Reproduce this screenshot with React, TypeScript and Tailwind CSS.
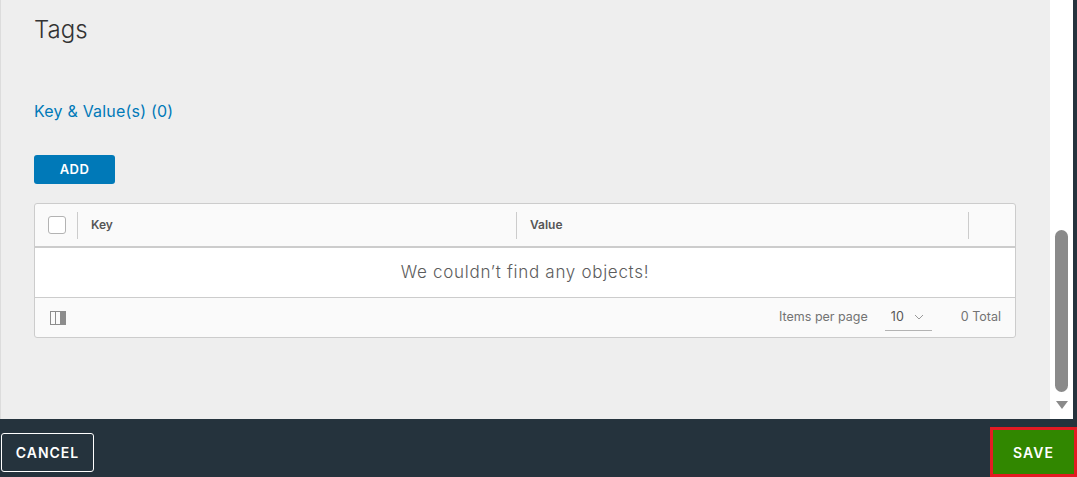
import React from 'react';

const font = { fontFamily: 'Inter, "Noto Sans", sans-serif' };

const ColumnIcon = () => (
    <svg width="16" height="14" viewBox="0 0 16 14" className="block">
        <rect x="0.5" y="0.5" width="15" height="13" fill="none" stroke="#8c8c8c" />
        <line x1="5.5" y1="1" x2="5.5" y2="13" stroke="#8c8c8c" />
        <rect x="10" y="1" width="5.5" height="12" fill="#8c8c8c" />
    </svg>
);

export default function App() {
    return (
        <div className="w-[1077px] h-[477px] flex flex-col overflow-hidden" style={font}>
            <div className="flex h-[419px]">
                <main className="flex-1 bg-[#eeeeee] border-l border-[#dcdcdc] pl-[33px] pr-[34px]">
                    <h2 className="text-[24px] font-light text-[#333] leading-none pt-[18px]">Tags</h2>
                    <div className="mt-[61px] text-[16px] text-[#0079b8] leading-none tracking-[0.2px]">Key &amp; Value(s) (0)</div>
                    <button className="mt-[36px] w-[81px] h-[29px] rounded-[3px] bg-[#0079b8] text-white text-[13px] font-semibold tracking-[0.5px]">
                        ADD
                    </button>
                    <div className="mt-[19px] bg-[#fafafa] border border-[#cccccc] rounded-[3px] text-[12px]">
                        <div className="flex items-center h-[44px] border-b-2 border-[#cccccc] text-[#565656] font-semibold">
                            <div className="w-[43px] flex items-center justify-between pl-[13px] h-full">
                                <span className="w-[18px] h-[18px] rounded-[3px] border border-[#b3b3b3] bg-white" />
                                <span className="w-px h-[27px] bg-[#cccccc]" />
                            </div>
                            <div className="w-[439px] flex items-center justify-between pl-[13px] h-full">
                                <span>Key</span>
                                <span className="w-px h-[27px] bg-[#cccccc]" />
                            </div>
                            <div className="w-[452px] flex items-center justify-between pl-[13px] h-full">
                                <span>Value</span>
                                <span className="w-px h-[27px] bg-[#cccccc]" />
                            </div>
                        </div>
                        <div className="h-[50px] bg-white border-b border-[#cccccc] flex items-center justify-center text-[17px] font-light tracking-[0.7px] text-[#5c5c5c]">
                            We couldn’t find any objects!
                        </div>
                        <div className="h-[39px] flex items-center pl-[15px] pr-[14px] text-[#737373]">
                            <ColumnIcon />
                            <div className="ml-auto flex items-center text-[12.5px]">
                                <span>Items per page</span>
                                <div className="ml-[17px] w-[47px] h-[26px] border-b border-[#b3b3b3] flex items-center pl-[6px] text-[#565656]">
                                    <span>10</span>
                                    <svg width="10" height="6" viewBox="0 0 10 6" className="ml-[10px]">
                                        <path d="M1 1 L5 5 L9 1" fill="none" stroke="#999" strokeWidth="1" />
                                    </svg>
                                </div>
                                <span className="ml-[29px]">0 Total</span>
                            </div>
                        </div>
                    </div>
                </main>
                <div className="w-[23px] bg-white flex flex-col items-center pt-[230px]">
                    <div className="w-[13px] h-[162px] rounded-full bg-[#8a8a8a]" />
                    <svg width="12" height="8" viewBox="0 0 12 8" className="mt-[9px]">
                        <path d="M0 0 H12 L6 8 Z" fill="#8a8a8a" />
                    </svg>
                </div>
                <div className="w-[4px] bg-[#25333d]" />
            </div>
            <footer className="h-[58px] bg-[#25333d] flex items-end justify-between">
                <button className="mb-[5px] ml-px w-[93px] h-[39px] border border-white rounded-[3px] text-white text-[14px] font-semibold tracking-[1px]">
                    CANCEL
                </button>
                <button className="w-[87px] h-[50px] bg-[#318700] border-[3px] border-[#e31b23] text-white text-[14px] font-semibold tracking-[1px]">
                    SAVE
                </button>
            </footer>
        </div>
    );
}
